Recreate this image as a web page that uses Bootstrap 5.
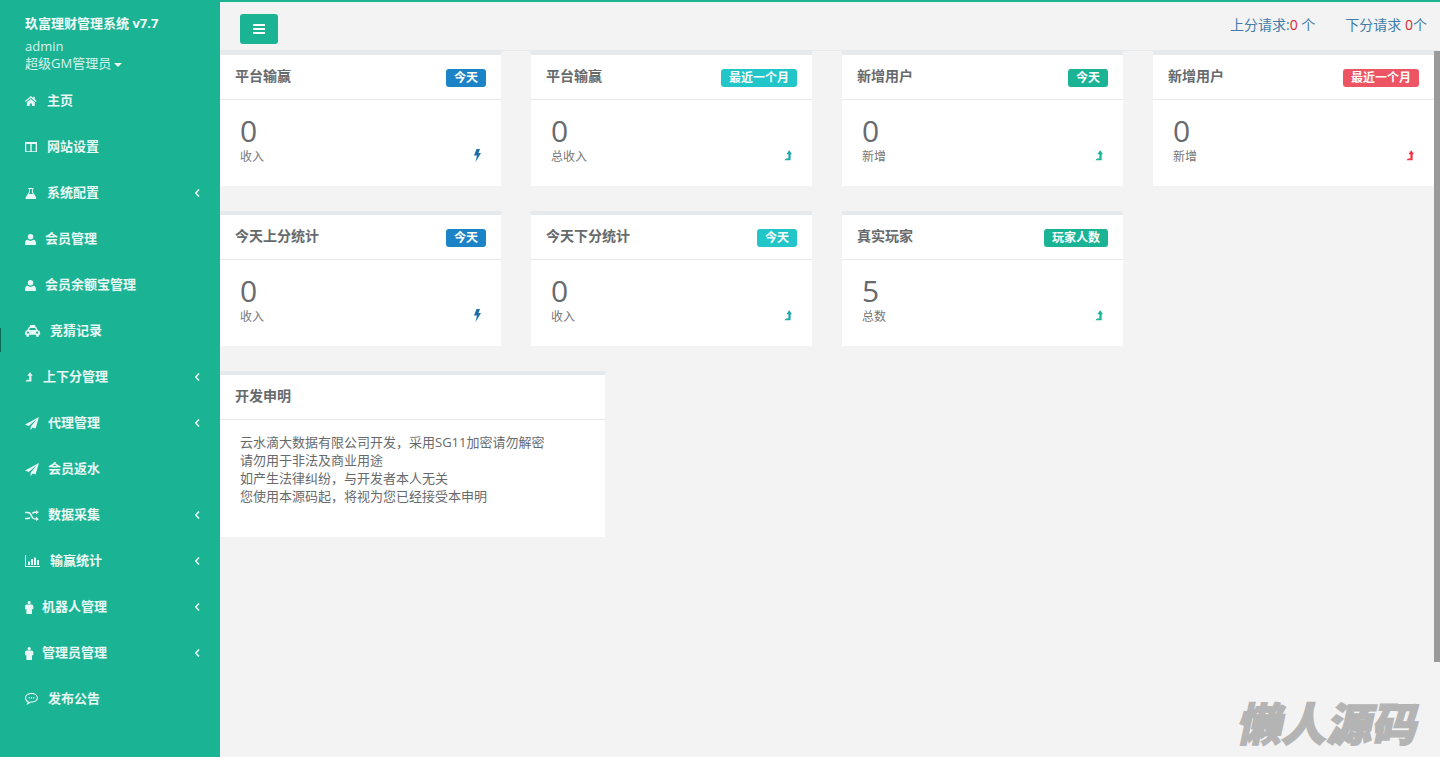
<!DOCTYPE html>
<html lang="zh-CN">
<head>
<meta charset="utf-8">
<title>玖富理财管理系统</title>
<link href="https://cdn.jsdelivr.net/npm/bootstrap@5.3.0/dist/css/bootstrap.min.css" rel="stylesheet">
<style>
html,body{height:757px;overflow:hidden}
body{font-family:"Open Sans","Noto Sans CJK SC",sans-serif;font-size:13px;color:#676a6c;background:#f3f3f4;line-height:18px}
.shell{height:757px}
.side{width:220px;flex:none;background:#1ab394;position:relative;color:#fff}
.side-head{padding:14px 0 0 25px;height:78px}
.brand{font-weight:700;font-size:13px;line-height:18px;color:#f2fbf9}
.who{margin-top:5px;line-height:18px;color:#d8f3ed}
.who-role{margin-top:-1px}
.who-role i{display:inline-block;border:4px solid transparent;border-top-color:#e8f8f5;border-bottom:0;margin-left:3px;vertical-align:middle}
.menu-row{height:46px;padding:0 20px 0 25px;gap:8px;color:#e9f8f5;font-weight:700;font-size:13px;line-height:46px;margin:0}
.menu-row span{margin-top:-2px}
.menu-row svg{flex:none;fill:currentColor}
.menu-row .chev{margin-left:auto;fill:none;stroke:currentColor;stroke-width:1.6}
.mark-line{position:absolute;left:0;top:328px;width:1px;height:24px;background:#0b6b58}
.main-col{min-width:0;position:relative;border-top:2px solid #1ab394}
.topbar{height:49px;border-bottom:1px solid #e7eaec;padding:12px 13px 0 20px;align-items:flex-start!important}
.burger{width:38px;height:30px;background:#1ab394;border:0;border-radius:3px;padding:0;display:flex;align-items:center;justify-content:center}
.req-links{gap:30px;font-size:14px;line-height:24px;color:#3f7ca8;margin-top:-1px}
.req-links b{font-weight:400;color:#d9282f}
.stat-grid{grid-template-columns:repeat(4,281px);gap:25px 30px;margin-bottom:25px}
.panel-box{background:#fff;border-top:4px solid #e7eaec;border-radius:0}
.panel-title{height:45px;border-bottom:1px solid #e7eaec;padding:0 15px;font-weight:700;font-size:14px}
.panel-title>span:first-child{margin-top:-3px}
.tag-pill{font-size:12px;line-height:14px;padding:2px 8px;border-radius:3px;font-weight:700;color:#fff;margin-top:2px}
.tone-blue{background:#1c84c6}.tone-cyan{background:#23c6c8}.tone-green{background:#1ab394}.tone-red{background:#ed5565}
.panel-body-stat{height:86px;padding:14px 20px 0 20px}
.big-num{font-size:30px;line-height:33px;color:#676a6c}
.sub-row{font-size:12px;line-height:18px;color:#777;margin-top:1px}
.sub-row svg{margin-top:-3px}
.ink-blue{fill:#1c6fa8}.ink-cyan{fill:#23a6a8}.ink-green{fill:#1ab394}.ink-red{fill:#ed3545}
.notice-box{width:385px}
.notice-text{height:117px;padding:13px 20px 0}
.thumb{position:absolute;right:0;top:49px;width:6px;height:611px;background:#9a9a9a}
.wm{position:absolute;left:1020px;top:693px;font-family:"Noto Sans CJK SC",sans-serif;font-weight:900;font-size:45px;line-height:54px;color:#b4b4b4;transform:skewX(-12deg);white-space:nowrap;-webkit-text-stroke:1.5px #b4b4b4}
</style>
</head>
<body>
<svg width="0" height="0" class="position-absolute">
<defs>
<symbol id="i-home" preserveAspectRatio="xMinYMid meet" viewBox="0 0 14 12"><path d="M7 0 0 6l.9 1.100L7 2l6.100 5.100L14 6l-2.300-2V1h-1.800v1.400zM2.300 7.600 7 3.600l4.700 4V12H8.300V9H5.700v3H2.300z"/></symbol>
<symbol id="i-cols" preserveAspectRatio="xMinYMid meet" viewBox="1 1 12 10.500"><path fill-rule="evenodd" d="M1 1h12v10.500H1zM2.300 3v7.200h4V3zm5.400 0v7.200h4V3z"/></symbol>
<symbol id="i-flask" preserveAspectRatio="xMinYMid meet" viewBox="0 0 14 13"><path fill-rule="evenodd" d="M3.800 0h6.400v1.100H9.300v3.700l3.900 6.400c.5 1 0 1.800-1 1.800H1.800c-1 0-1.500-.8-1-1.800l3.900-6.400V1.100h-.9zm2 1.100v4L4.600 7.200h4.800L8.200 5.100v-4z"/></symbol>
<symbol id="i-user" preserveAspectRatio="xMinYMid meet" viewBox="0 0 12 12"><circle cx="6" cy="3" r="3"/><path d="M.5 12c-.5 0-.5-.5-.5-1 0-2.500.7-4.600 2.900-4.600C4 7.200 5 7.500 6 7.500s2-.3 3.100-1.100C11.300 6.400 12 8.500 12 11c0 .5 0 1-.5 1z"/></symbol>
<symbol id="i-taxi" preserveAspectRatio="xMinYMid meet" viewBox="0 0 17 13.500"><path fill-rule="evenodd" d="M5.500 0h6v2h1l1.700 3.500c1.600.4 2.800 1.500 2.800 3.200V11h-1.500v1a1.500 1.500 0 0 1-3 0v-1H4.500v1a1.500 1.500 0 0 1-3 0v-1H0V8.700c0-1.700 1.200-2.800 2.800-3.200L4.500 2h1zM5.500 3.500 4.500 5.500h8l-1-2zM3.300 7.300a1.300 1.300 0 1 0 0 2.600 1.300 1.300 0 0 0 0-2.600zm10.400 0a1.300 1.300 0 1 0 0 2.600 1.300 1.300 0 0 0 0-2.600z"/></symbol>
<symbol id="i-lvl" preserveAspectRatio="xMinYMid meet" viewBox="0 0 10 13"><path d="M6.500 0l3.500 4.800H8.300V12.500H.6L2.500 10.200h3V4.800H3z"/></symbol>
<symbol id="i-plane" preserveAspectRatio="xMinYMid meet" viewBox="0 0 15 14"><path d="M15 0 0 8l4 1.700L12.500 2.500 6 10.500V14l2.400-2.800 3 1.300z"/></symbol>
<symbol id="i-rand" preserveAspectRatio="xMinYMid meet" viewBox="0 0 15 12"><path d="M0 2h3c2.800 0 3.700 1.900 4.500 3.500S9 9 11 9h1V7l3 3-3 2v-1.600h-1C8 10.400 7 8.200 6.200 6.500 5.500 5 5 3.600 3 3.600H0zM0 8.400h3c.9 0 1.500-.4 1.900-1l.9 1.500c-.7.700-1.600 1.100-2.800 1.100H0zM7.600 3.100C8.500 2.300 9.500 1.700 11 1.700h1V0l3 2.500L12 5V3.300h-1c-1 0-1.700.5-2.400 1.300z"/></symbol>
<symbol id="i-bars" preserveAspectRatio="xMinYMid meet" viewBox="0 0 15 12"><path d="M0 0h1v11h14v1H0zM3 6.500h2V10H3zM6 4h2v6H6zM9 2.500h2V10H9zM12 5h2v5h-2z"/></symbol>
<symbol id="i-male" preserveAspectRatio="xMinYMid meet" viewBox="0 0 9 14"><circle cx="4.500" cy="1.700" r="1.700"/><path d="M2 3.800h5c1.100 0 2 .9 2 2V9H7.500v5h-6V9H0V5.800c0-1.100.9-2 2-2z"/></symbol>
<symbol id="i-chat" preserveAspectRatio="xMinYMid meet" viewBox="0 0 14 13"><path fill-rule="evenodd" d="M7 0c3.900 0 7 2.300 7 5.200s-3.100 5.200-7 5.200h-.9C4.800 11.700 3 12.500 1.500 13c.6-.9 1-1.900 1-3C1 9 0 7.200 0 5.200 0 2.300 3.100 0 7 0zm0 1.200C3.700 1.200 1.200 3 1.200 5.200c0 1.600 1 2.800 2.600 3.600-.1.600-.2 1.100-.4 1.500.9-.4 1.600-1 2.200-1.100.5.100 1 .1 1.400.1 3.300 0 5.800-1.800 5.800-4.100S10.300 1.200 7 1.200zM4 4.400h1.300v1.500H4zm2.400 0h1.300v1.500H6.400zm2.400 0H10v1.500H8.800z"/></symbol>
<symbol id="i-bolt" preserveAspectRatio="xMinYMid meet" viewBox="0 0 7 13"><path d="M2.500 0H6L4.400 4H7L1.500 13l1.400-6.500H0z"/></symbol>
</defs>
</svg>
<div class="shell d-flex">
  <aside class="side d-flex flex-column">
    <div class="side-head">
      <div class="brand">玖富理财管理系统 v7.7</div>
      <div class="who">admin<div class="who-role">超级GM管理员<i></i></div></div>
    </div>
    <ul class="list-unstyled m-0">
      <li class="menu-row d-flex align-items-center"><svg width="14" height="10"><use href="#i-home"/></svg><span>主页</span></li>
      <li class="menu-row d-flex align-items-center"><svg width="14" height="10.500"><use href="#i-cols"/></svg><span>网站设置</span></li>
      <li class="menu-row d-flex align-items-center"><svg width="14" height="11"><use href="#i-flask"/></svg><span>系统配置</span><svg class="chev" width="5" height="8" viewBox="0 0 5 8"><path d="M4 .5.800 4 4 7.500"/></svg></li>
      <li class="menu-row d-flex align-items-center"><svg width="12" height="11"><use href="#i-user"/></svg><span>会员管理</span></li>
      <li class="menu-row d-flex align-items-center"><svg width="12" height="11"><use href="#i-user"/></svg><span>会员余额宝管理</span></li>
      <li class="menu-row d-flex align-items-center"><svg width="17" height="12"><use href="#i-taxi"/></svg><span>竞猜记录</span></li>
      <li class="menu-row d-flex align-items-center"><svg width="10" height="10"><use href="#i-lvl"/></svg><span>上下分管理</span><svg class="chev" width="5" height="8" viewBox="0 0 5 8"><path d="M4 .5.800 4 4 7.500"/></svg></li>
      <li class="menu-row d-flex align-items-center"><svg width="15" height="13"><use href="#i-plane"/></svg><span>代理管理</span><svg class="chev" width="5" height="8" viewBox="0 0 5 8"><path d="M4 .5.800 4 4 7.500"/></svg></li>
      <li class="menu-row d-flex align-items-center"><svg width="15" height="13"><use href="#i-plane"/></svg><span>会员返水</span></li>
      <li class="menu-row d-flex align-items-center"><svg width="15" height="11"><use href="#i-rand"/></svg><span>数据采集</span><svg class="chev" width="5" height="8" viewBox="0 0 5 8"><path d="M4 .5.800 4 4 7.500"/></svg></li>
      <li class="menu-row d-flex align-items-center"><svg width="17" height="12"><use href="#i-bars"/></svg><span>输赢统计</span><svg class="chev" width="5" height="8" viewBox="0 0 5 8"><path d="M4 .5.800 4 4 7.500"/></svg></li>
      <li class="menu-row d-flex align-items-center"><svg width="9" height="13"><use href="#i-male"/></svg><span>机器人管理</span><svg class="chev" width="5" height="8" viewBox="0 0 5 8"><path d="M4 .5.800 4 4 7.500"/></svg></li>
      <li class="menu-row d-flex align-items-center"><svg width="9" height="13"><use href="#i-male"/></svg><span>管理员管理</span><svg class="chev" width="5" height="8" viewBox="0 0 5 8"><path d="M4 .5.800 4 4 7.500"/></svg></li>
      <li class="menu-row d-flex align-items-center"><svg width="15" height="12"><use href="#i-chat"/></svg><span>发布公告</span></li>
    </ul>
    <span class="mark-line"></span>
  </aside>
  <main class="main-col flex-grow-1">
    <nav class="topbar d-flex justify-content-between">
      <button class="burger" type="button" aria-label="menu"><svg width="12" height="10" viewBox="0 0 12 10" fill="#fff"><path d="M0 0h12v2H0zM0 4h12v2H0zM0 8h12v2H0z"/></svg></button>
      <div class="req-links d-flex">
        <span>上分请求:<b>0</b> 个</span>
        <span>下分请求 <b>0</b>个</span>
      </div>
    </nav>
    <section class="d-grid stat-grid">
      <article class="panel-box">
        <div class="panel-title d-flex justify-content-between align-items-center"><span>平台输赢</span><span class="tag-pill tone-blue">今天</span></div>
        <div class="panel-body-stat"><div class="big-num">0</div><div class="sub-row d-flex justify-content-between align-items-center"><span>收入</span><svg class="ink-blue" width="7" height="13"><use href="#i-bolt"/></svg></div></div>
      </article>
      <article class="panel-box">
        <div class="panel-title d-flex justify-content-between align-items-center"><span>平台输赢</span><span class="tag-pill tone-cyan">最近一个月</span></div>
        <div class="panel-body-stat"><div class="big-num">0</div><div class="sub-row d-flex justify-content-between align-items-center"><span>总收入</span><svg class="ink-cyan" width="8" height="11"><use href="#i-lvl"/></svg></div></div>
      </article>
      <article class="panel-box">
        <div class="panel-title d-flex justify-content-between align-items-center"><span>新增用户</span><span class="tag-pill tone-green">今天</span></div>
        <div class="panel-body-stat"><div class="big-num">0</div><div class="sub-row d-flex justify-content-between align-items-center"><span>新增</span><svg class="ink-green" width="8" height="11"><use href="#i-lvl"/></svg></div></div>
      </article>
      <article class="panel-box">
        <div class="panel-title d-flex justify-content-between align-items-center"><span>新增用户</span><span class="tag-pill tone-red">最近一个月</span></div>
        <div class="panel-body-stat"><div class="big-num">0</div><div class="sub-row d-flex justify-content-between align-items-center"><span>新增</span><svg class="ink-red" width="8" height="11"><use href="#i-lvl"/></svg></div></div>
      </article>
      <article class="panel-box">
        <div class="panel-title d-flex justify-content-between align-items-center"><span>今天上分统计</span><span class="tag-pill tone-blue">今天</span></div>
        <div class="panel-body-stat"><div class="big-num">0</div><div class="sub-row d-flex justify-content-between align-items-center"><span>收入</span><svg class="ink-blue" width="7" height="13"><use href="#i-bolt"/></svg></div></div>
      </article>
      <article class="panel-box">
        <div class="panel-title d-flex justify-content-between align-items-center"><span>今天下分统计</span><span class="tag-pill tone-cyan">今天</span></div>
        <div class="panel-body-stat"><div class="big-num">0</div><div class="sub-row d-flex justify-content-between align-items-center"><span>收入</span><svg class="ink-cyan" width="8" height="11"><use href="#i-lvl"/></svg></div></div>
      </article>
      <article class="panel-box">
        <div class="panel-title d-flex justify-content-between align-items-center"><span>真实玩家</span><span class="tag-pill tone-green">玩家人数</span></div>
        <div class="panel-body-stat"><div class="big-num">5</div><div class="sub-row d-flex justify-content-between align-items-center"><span>总数</span><svg class="ink-green" width="8" height="11"><use href="#i-lvl"/></svg></div></div>
      </article>
    </section>
    <article class="panel-box notice-box">
      <div class="panel-title d-flex align-items-center"><span>开发申明</span></div>
      <div class="notice-text">云水滴大数据有限公司开发，采用SG11加密请勿解密<br>请勿用于非法及商业用途<br>如产生法律纠纷，与开发者本人无关<br>您使用本源码起，将视为您已经接受本申明</div>
    </article>
    <span class="thumb"></span>
    <span class="wm">懒人源码</span>
  </main>
</div>
<script src="https://cdn.jsdelivr.net/npm/bootstrap@5.3.0/dist/js/bootstrap.bundle.min.js"></script>
</body>
</html>
